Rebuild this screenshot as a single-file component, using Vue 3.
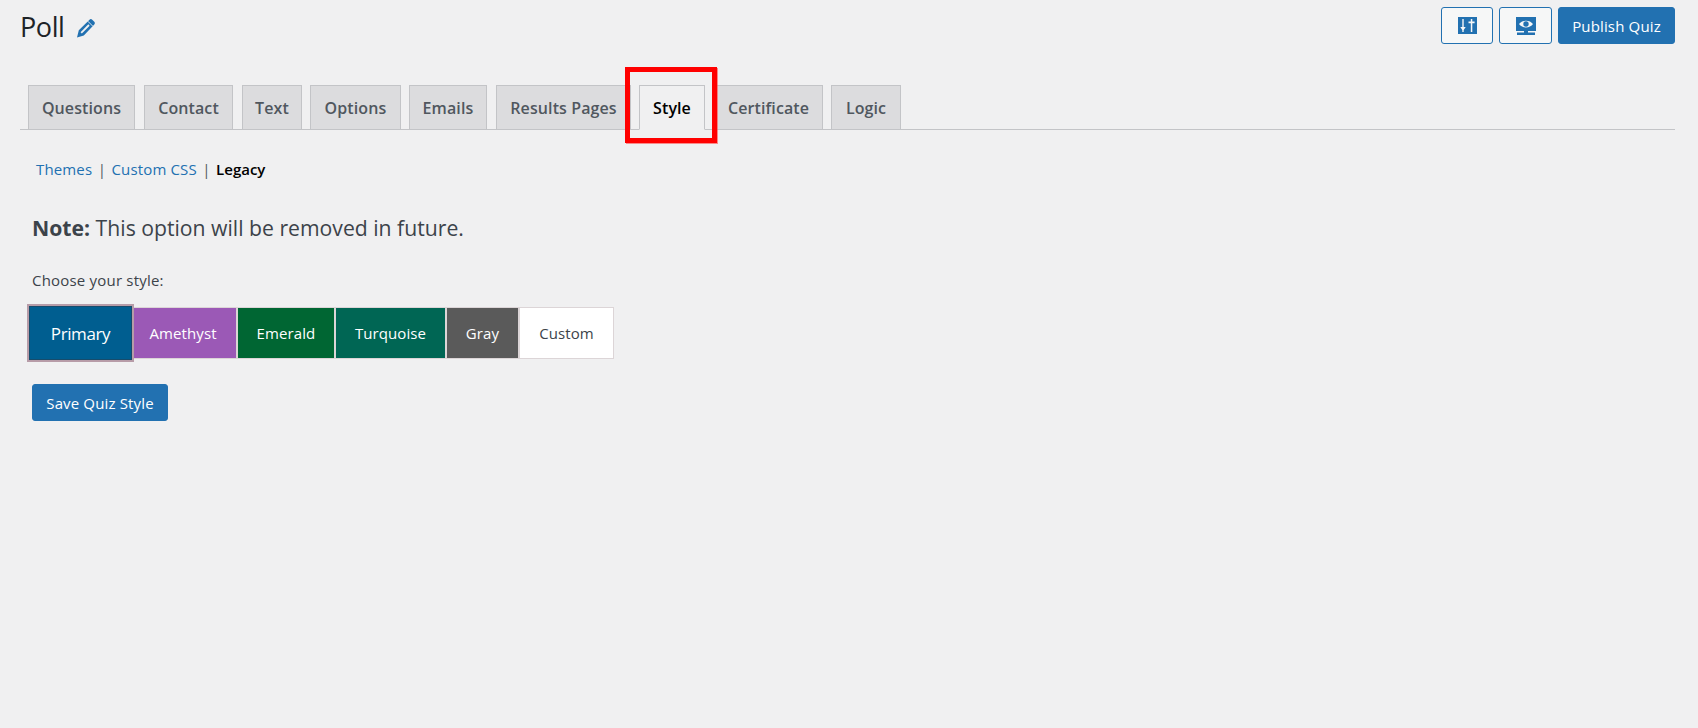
<script setup>
const tabs = [
  { label: 'Questions', width: 107, gap: 9 },
  { label: 'Contact', width: 89, gap: 9 },
  { label: 'Text', width: 60, gap: 8 },
  { label: 'Options', width: 91, gap: 8 },
  { label: 'Emails', width: 78, gap: 9 },
  { label: 'Results Pages', width: 135, gap: 8 },
  { label: 'Style', width: 66, gap: 9, active: true },
  { label: 'Certificate', width: 109, gap: 8 },
  { label: 'Logic', width: 70, gap: 0 }
]
const themes = [
  { label: 'Amethyst', cls: 'amethyst', width: 104 },
  { label: 'Emerald', cls: 'emerald', width: 98 },
  { label: 'Turquoise', cls: 'turquoise', width: 111 },
  { label: 'Gray', cls: 'gray', width: 73 },
  { label: 'Custom', cls: 'custom', width: 95 }
]
</script>

<template>
  <div class="page">
    <header class="head">
      <div class="title-wrap">
        <h1 class="title">Poll</h1>
        <svg class="pencil" viewBox="0 0 20 20" width="20" height="20" aria-hidden="true">
          <path fill="#2271b1" d="M1 19.500l1.800-7.300L13.500 1.700c.8-.8 1.900-.8 2.700 0l2.100 2.100c.8.8.8 1.900 0 2.700L7.800 17.400z"/>
          <path stroke="#f0f0f1" stroke-width="1.800" fill="none" d="M5.200 14.800l7.800-7.800"/>
          <path stroke="#f0f0f1" stroke-width="0.900" fill="none" d="M11.800 3.200l5 5"/>
        </svg>
      </div>
      <div class="actions">
        <button class="btn outline first" type="button">
          <svg viewBox="0 0 19 17" width="19" height="17" aria-hidden="true">
            <path fill="#2271b1" fill-rule="evenodd" d="M0 0h19v17H0zM4.300 2v8H2.300l2 3v2h1.400v-2l2-3H5.700V2zM12.800 2v2.600h-2.300v1.600h2.300V15h1.500V6.200h2.300V4.600h-2.300V2z"/>
          </svg>
        </button>
        <button class="btn outline second" type="button">
          <svg viewBox="0 0 20 18" width="20" height="18" aria-hidden="true">
            <path fill="#2271b1" fill-rule="evenodd" d="M0 0h20v14H0zM3 7c3-4.500 11-4.500 14 0-3 4.500-11 4.500-14 0z"/>
            <circle fill="#2271b1" cx="10" cy="7" r="2.700"/>
            <path fill="#2271b1" d="M8 14h4v1.500H8zM1 15.500h18V18H1z"/>
          </svg>
        </button>
        <button class="btn solid publish" type="button">Publish Quiz</button>
      </div>
    </header>

    <nav class="tabs">
      <a
        v-for="tab in tabs"
        :key="tab.label"
        class="tab"
        :class="{ active: tab.active }"
        :style="{ width: tab.width + 'px', marginRight: tab.gap + 'px' }"
      >{{ tab.label }}</a>
    </nav>

    <div class="subnav">
      <a class="sublink">Themes</a>
      <span class="sep">|</span>
      <a class="sublink">Custom CSS</a>
      <span class="sep">|</span>
      <b class="current">Legacy</b>
    </div>

    <section class="body">
      <p class="note"><strong>Note:</strong> This option will be removed in future.</p>
      <p class="choose">Choose your style:</p>
      <div class="themes">
        <button class="theme primary" type="button">Primary</button>
        <button
          v-for="t in themes"
          :key="t.label"
          class="theme"
          :class="t.cls"
          :style="{ width: t.width + 'px' }"
          type="button"
        >{{ t.label }}</button>
      </div>
      <button class="btn solid save" type="button">Save Quiz Style</button>
    </section>

    <div class="highlight"></div>
  </div>
</template>

<style>
html, body { margin: 0; background: #f0f0f1; }
</style>

<style scoped>
.page {
  position: relative;
  width: 1698px;
  height: 728px;
  overflow: hidden;
  box-sizing: border-box;
  padding: 0 23px 0 20px;
  background: #f0f0f1;
  color: #3c434a;
  font-family: "Open Sans", "Noto Sans", sans-serif;
  font-size: 14px;
}
.head {
  display: flex;
  justify-content: space-between;
  align-items: flex-start;
  height: 85px;
}
.title-wrap { display: flex; align-items: center; gap: 10px; margin-top: 8px; }
.title {
  margin: 0;
  font-size: 27px;
  font-weight: 400;
  line-height: 38px;
  color: #1d2327;
  letter-spacing: -0.4px;
}
.pencil { margin-top: 1px; margin-left: 1px; }
.actions { display: flex; gap: 6px; margin-top: 7px; }
.btn {
  box-sizing: border-box;
  height: 37px;
  border-radius: 3px;
  font-family: inherit;
  font-size: 15px;
  letter-spacing: 0.15px;
  padding: 0;
  display: flex;
  align-items: center;
  justify-content: center;
}
.outline { background: #f6f7f7; border: 1px solid #2271b1; }
.first { width: 52px; }
.second { width: 53px; }
.solid { background: #2271b1; border: 1px solid #2271b1; color: #fff; }
.publish { width: 117px; }
.tabs {
  display: flex;
  height: 45px;
  box-sizing: border-box;
  padding-left: 8px;
  border-bottom: 1px solid #c3c4c7;
}
.tab {
  box-sizing: border-box;
  height: 45px;
  display: flex;
  align-items: center;
  justify-content: center;
  background: #dcdcde;
  border: 1px solid #c3c4c7;
  color: #50575e;
  font-size: 16px;
  font-weight: 600;
  letter-spacing: 0.1px;
  white-space: nowrap;
}
.tab.active {
  background: #f0f0f1;
  border-bottom-color: #f0f0f1;
  color: #000;
}
.subnav {
  display: flex;
  align-items: center;
  height: 22px;
  margin: 28px 0 0 16px;
  font-size: 15px;
  gap: 5.5px;
}
.sublink { color: #2271b1; letter-spacing: 0.15px; }
.sep { color: #50575e; }
.current { color: #000; font-weight: 600; }
.body { padding-left: 12px; }
.note {
  margin: 33px 0 0;
  font-size: 21.2px;
  line-height: 30px;
}
.note strong { font-weight: 700; }
.choose {
  margin: 27px 0 0;
  font-size: 15px;
  line-height: 20px;
  letter-spacing: 0.2px;
}
.themes {
  display: flex;
  align-items: center;
  height: 58px;
  margin: 14px 0 0 -5px;
}
.theme {
  box-sizing: border-box;
  height: 52px;
  padding: 0;
  border: 1px solid #dcd5d7;
  font-family: inherit;
  font-size: 15px;
  letter-spacing: 0.1px;
  color: #fff;
}
.primary {
  position: relative;
  z-index: 1;
  width: 107px;
  height: 58px;
  background: #005e90;
  border: 2px solid #b79ca8;
  box-shadow: inset 0 0 0 1px #174c6c;
  font-size: 17px;
  letter-spacing: -0.4px;
}
.amethyst { background: #9b59b6; margin-left: -1px; padding-right: 4px; }
.emerald { background: #006633; }
.turquoise { background: #006654; }
.gray { background: #5a5a5a; }
.custom { background: #fff; color: #3c434a; }
.save { width: 136px; margin-top: 22px; }
.highlight {
  position: absolute;
  left: 625px;
  top: 67px;
  width: 92px;
  height: 76px;
  box-sizing: border-box;
  border: 5px solid #ff0000;
  box-shadow: 1px 1px 0 rgba(255, 70, 70, 0.6);
  pointer-events: none;
}
</style>
